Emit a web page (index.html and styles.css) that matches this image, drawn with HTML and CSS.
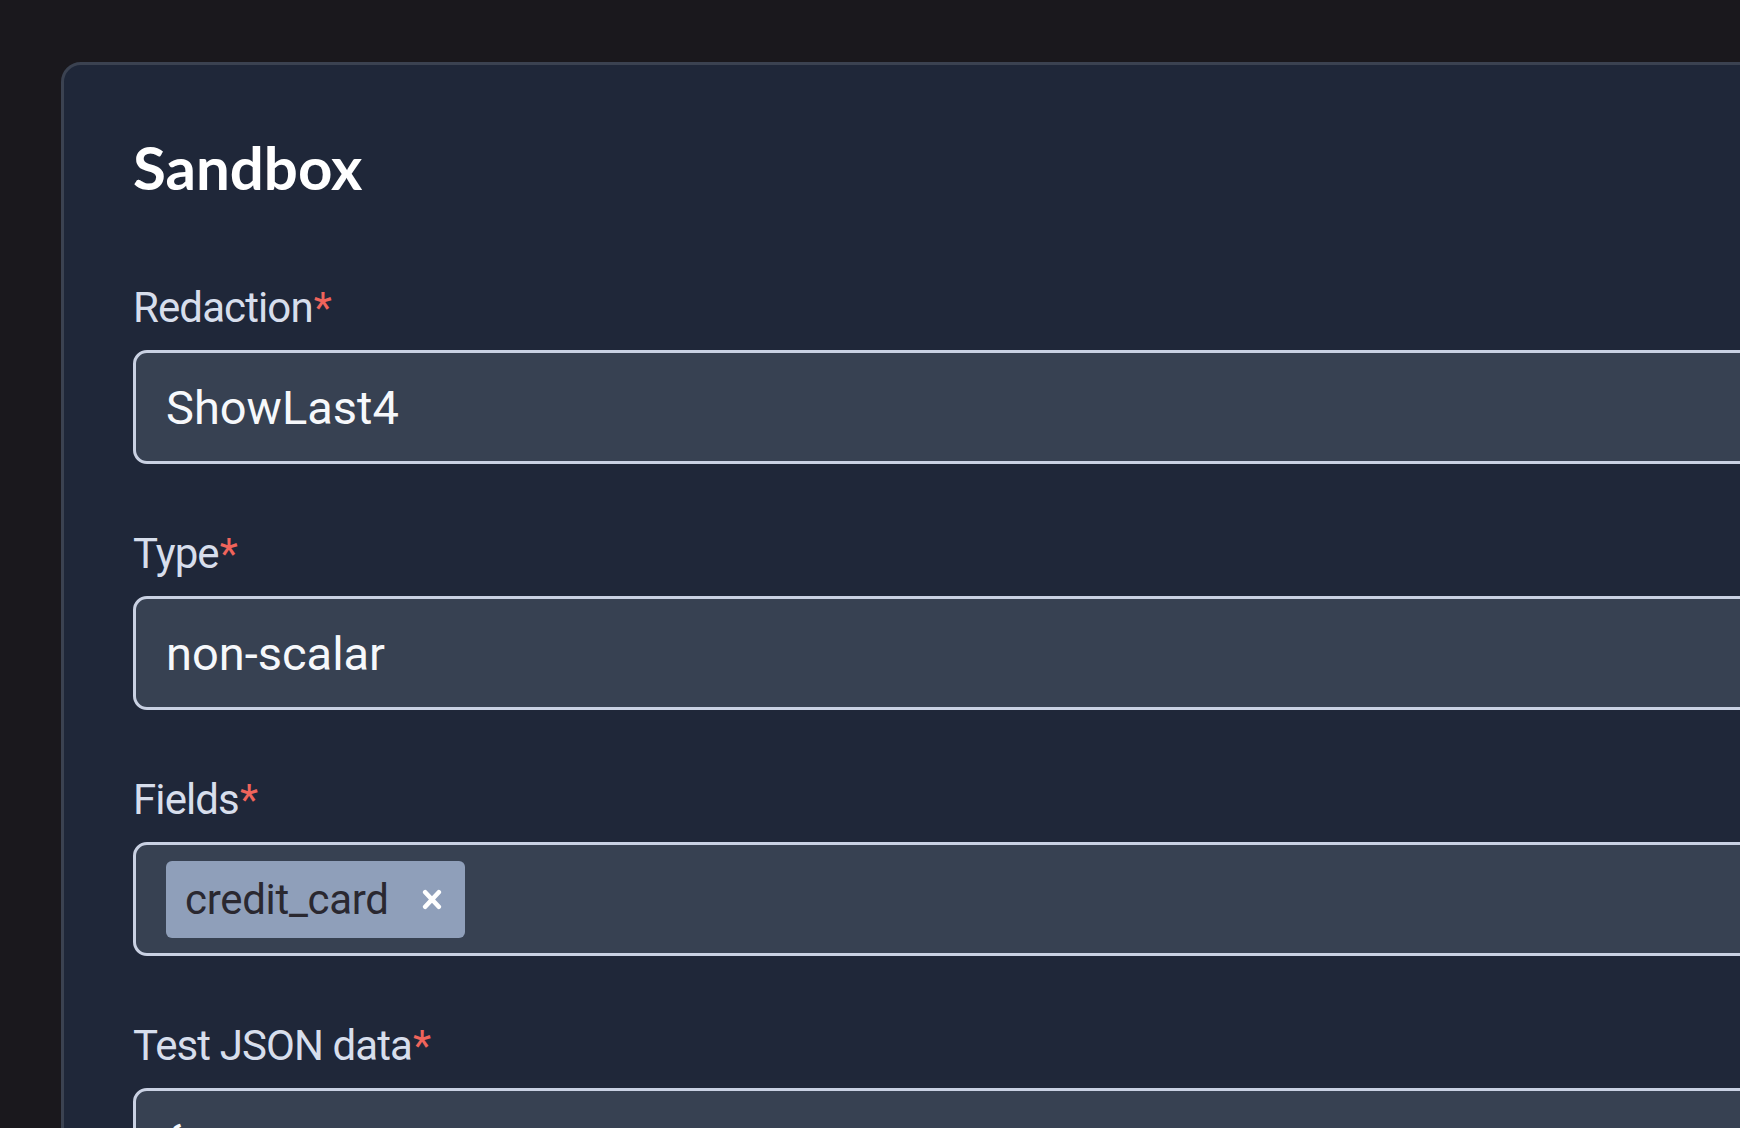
FILE: index.html
```html
<!DOCTYPE html>
<html lang="en">
<head>
<meta charset="utf-8">
<title>Sandbox</title>
<link rel="stylesheet" href="styles.css">
</head>
<body>
<main class="panel">
  <h1 class="title">Sandbox</h1>
  <div class="field">
    <label class="label">Redaction<span class="req">*</span></label>
    <div class="input">ShowLast4</div>
  </div>
  <div class="field">
    <label class="label">Type<span class="req">*</span></label>
    <div class="input">non-scalar</div>
  </div>
  <div class="field">
    <label class="label">Fields<span class="req">*</span></label>
    <div class="input input-tags">
      <span class="chip">credit_card
        <svg class="chip-x" viewBox="0 0 20 21" width="20" height="21" aria-hidden="true"><path d="M3.2 3.2 L16.8 17.8 M16.8 3.2 L3.2 17.8" stroke="#ffffff" stroke-width="4.6" stroke-linecap="round"/></svg>
      </span>
    </div>
  </div>
  <div class="field">
    <label class="label">Test JSON data<span class="req">*</span></label>
    <div class="input input-code">{</div>
  </div>
</main>
</body>
</html>
```
FILE: styles.css
```css
html, body {
  margin: 0;
  padding: 0;
}
body {
  background: #1a181d;
  height: 1128px;
  overflow: hidden;
  font-family: Roboto, "Liberation Sans", sans-serif;
}
.panel {
  box-sizing: border-box;
  margin: 62px 0 0 61px;
  width: 1800px;
  min-height: 1200px;
  background: #1f2739;
  border: 3px solid #3b4251;
  border-radius: 20px;
  padding: 66px 0 0 69px;
}
.title {
  margin: 0 0 79px 0;
  font-family: Lato, "Liberation Sans", sans-serif;
  font-weight: 700;
  font-size: 60px;
  line-height: 72px;
  color: #ffffff;
}
.field {
  margin-bottom: 64px;
}
.label {
  display: block;
  font-size: 42px;
  line-height: 52px;
  letter-spacing: -0.9px;
  color: #d7deec;
  margin-bottom: 16px;
}
.req {
  color: #f0645b;
  margin-left: 1px;
}
.input {
  box-sizing: border-box;
  height: 114px;
  background: #374152;
  border: 3px solid #c9d1e3;
  border-radius: 14px;
  padding: 0 30px;
  display: flex;
  align-items: center;
  font-size: 47px;
  color: #f6f8fb;
}
.chip {
  box-sizing: border-box;
  height: 77px;
  display: inline-flex;
  align-items: center;
  gap: 33px;
  padding: 0 23px 0 19px;
  background: #8f9fba;
  border-radius: 6px;
  color: #2a2830;
  font-size: 42px;
  letter-spacing: -0.3px;
}
.chip-x {
  display: block;
}
.input-code {
  display: block;
  height: 300px;
  padding-top: 22px;
  line-height: 62px;
  font-weight: 500;
}
```
